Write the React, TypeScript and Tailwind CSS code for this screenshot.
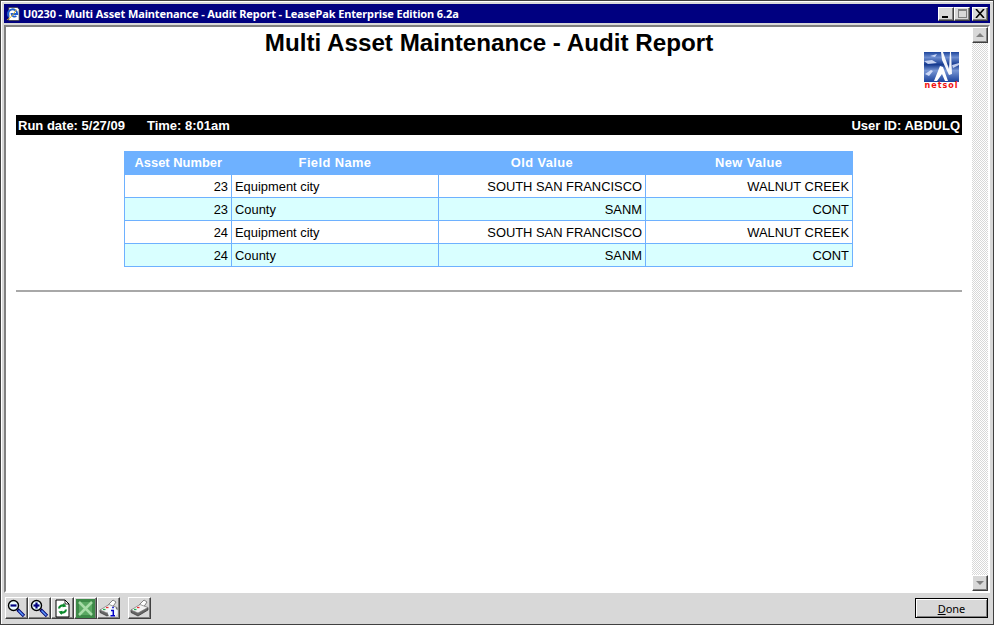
import { ReactNode } from "react";

const rows = [
  { asset: "23", field: "Equipment city", oldValue: "SOUTH SAN FRANCISCO", newValue: "WALNUT CREEK" },
  { asset: "23", field: "County", oldValue: "SANM", newValue: "CONT" },
  { asset: "24", field: "Equipment city", oldValue: "SOUTH SAN FRANCISCO", newValue: "WALNUT CREEK" },
  { asset: "24", field: "County", oldValue: "SANM", newValue: "CONT" },
];

const raised = "border border-t-white border-l-white border-r-[#404040] border-b-[#404040] bg-[#d8d8d8] shadow-[inset_-1px_-1px_0_#808080]";

const CaptionButton = ({ children, className }: { children: ReactNode; className?: string }) => (
  <div className={`${raised} w-4 h-[14px] flex items-center justify-center ${className ?? ""}`}>{children}</div>
);

const ToolButton = ({ children, className }: { children: ReactNode; className?: string }) => (
  <div className={`${raised} w-[23px] h-[22px] flex items-center justify-center ${className ?? ""}`}>
    <svg width="19" height="19" viewBox="0 0 19 19">{children}</svg>
  </div>
);

const Magnifier = ({ plus }: { plus?: boolean }) => (
  <>
    <path d="M10.5 10.5l6.5 6.5" stroke="#000070" strokeWidth="3.2" />
    <path d="M11.5 11.5l5 5" stroke="#5c9aff" strokeWidth="1.5" />
    <circle cx="6.5" cy="6.5" r="5" fill="#eafcff" stroke="#000" strokeWidth="1.4" />
    <path d="M3.5 6.5h6" stroke="#000080" strokeWidth="2.2" />
    {plus && <path d="M6.5 3.5v6" stroke="#000080" strokeWidth="2.2" />}
  </>
);

const Printer = ({ info }: { info?: boolean }) => (
  <>
    <path d="M9 6l5-5 3 2-4 6z" fill="#fff" stroke="#666" strokeWidth="0.8" />
    <path d="M1 11v2.500l7 3.500 10-6v-2.500z" fill="#666" stroke="#333" strokeWidth="0.7" />
    <path d="M1 11l9-5.500 8 3-10 5.500z" fill="#f2f2f2" stroke="#777" strokeWidth="0.7" />
    <path d="M4 10.500h2.500" stroke="#22b050" strokeWidth="1.300" />
    <path d="M7 8.500h2.500" stroke="#e03030" strokeWidth="1.300" />
    {info && (
      <>
        <circle cx="13.500" cy="13" r="5" fill="#f2f8ff" />
        <path d="M12 11.500h2.300v5M11.500 16.800h4.500M13.200 8.500h1.600" stroke="#0000c8" strokeWidth="1.500" fill="none" />
      </>
    )}
  </>
);

const NetsolLogo = () => (
  <div className="w-[35px] flex flex-col items-center">
    <svg width="35" height="30" viewBox="0 0 35 30" className="block">
      <defs>
        <linearGradient id="netsolBlue" x1="0" y1="0" x2="0" y2="1">
          <stop offset="0" stopColor="#1d459c" />
          <stop offset="0.18" stopColor="#6d8dd0" />
          <stop offset="0.42" stopColor="#163a90" />
          <stop offset="0.62" stopColor="#7896d4" />
          <stop offset="1" stopColor="#1a429c" />
        </linearGradient>
      </defs>
      <rect width="35" height="30" fill="url(#netsolBlue)" />
      <path d="M17 0h2l6 17 1-17h1l1 22-3 1-7-15z" fill="#fff" opacity="0.95" />
      <path d="M16 14l3 1 5 14h-3l-3-7-5 7h-3z" fill="#fff" />
      <path d="M0 9l8-1 5 3-9 1z M1 22l6-4 2 1-4 5z M28 13l7-2v2l-6 3z M6 4l7-2-2 3z" fill="#dfe8ff" opacity="0.85" />
    </svg>
    <span className="mt-[1px] text-[8px] leading-[6px] font-bold tracking-[1px] text-[#f01010] font-['DejaVu_Sans',sans-serif]">netsol</span>
  </div>
);

export default function App() {
  return (
    <div className="w-[994px] h-[625px] bg-[#d8d8d8] border border-[#404040] shadow-[inset_1px_1px_0_#fff] p-[3px] flex flex-col overflow-hidden font-['Liberation_Sans',sans-serif]">
      {/* title bar */}
      <div className="h-[19px] shrink-0 bg-[#000080] flex items-center pl-[2px] pr-[2px] gap-[2px]">
        <svg width="15" height="16" viewBox="0 0 16 16">
          <path d="M3 1h9l2 2v12H3z" fill="#fff" stroke="#333" strokeWidth="0.8" />
          <path d="M3 11a5 5 0 1 1 9-3H6a3 3 0 0 0 5 2" fill="none" stroke="#1f5fd0" strokeWidth="2" />
          <path d="M1 14c2 0 7-5 10-11" fill="none" stroke="#e8b820" strokeWidth="1" />
        </svg>
        <span className="text-[11px] leading-none font-bold tracking-[-0.12px] text-white font-['Noto_Sans',sans-serif]">U0230 - Multi Asset Maintenance - Audit Report - LeasePak Enterprise Edition 6.2a</span>
        <div className="ml-auto flex items-center">
          <CaptionButton><div className="w-[6px] h-[2px] bg-black mt-[6px] mr-[2px]" /></CaptionButton>
          <CaptionButton className="mr-[2px]"><div className="w-[9px] h-[9px] border border-[#808080] border-t-2" /></CaptionButton>
          <CaptionButton>
            <svg width="10" height="9" viewBox="0 0 10 9"><path d="M1 0l8 9M9 0L1 9" stroke="#000" strokeWidth="1.6" /></svg>
          </CaptionButton>
        </div>
      </div>

      {/* page area */}
      <div className="mt-[2px] flex-1 min-h-0 flex border-2 border-t-[#808080] border-l-[#808080] border-r-white border-b-white">
        <div className="flex-1 min-w-0 bg-white pt-[2px] px-[10px]">
          <div className="relative">
            <h1 className="text-center text-[24.2px] leading-[28px] font-bold text-black">Multi Asset Maintenance - Audit Report</h1>
            <div className="absolute right-[3px] top-[23px]"><NetsolLogo /></div>
          </div>
          <div className="mt-[58px] h-[20px] bg-black flex items-center justify-between px-[2px] pt-[1px] text-[13px] font-bold text-white">
            <div className="flex gap-[22px]">
              <span>Run date: 5/27/09</span>
              <span>Time: 8:01am</span>
            </div>
            <span>User ID: ABDULQ</span>
          </div>
          <table className="mt-[16px] ml-[108px] w-[728px] table-fixed border-collapse border border-[#6eb1ff] text-[12.9px] text-black">
            <colgroup>
              <col className="w-[107px]" />
              <col className="w-[207px]" />
              <col className="w-[207px]" />
              <col className="w-[207px]" />
            </colgroup>
            <thead>
              <tr className="h-[23px] bg-[#6eb1ff] text-white font-bold">
                <th>Asset Number</th>
                <th className="tracking-[0.4px]">Field Name</th>
                <th className="tracking-[0.4px]">Old Value</th>
                <th className="tracking-[0.4px]">New Value</th>
              </tr>
            </thead>
            <tbody>
              {rows.map((row, i) => (
                <tr key={i} className={`h-[23px] ${i % 2 === 1 ? "bg-[#d9ffff]" : "bg-white"}`}>
                  <td className="border border-[#6eb1ff] text-right px-[3px] pt-[1px]">{row.asset}</td>
                  <td className="border border-[#6eb1ff] text-left px-[3px] pt-[1px]">{row.field}</td>
                  <td className="border border-[#6eb1ff] text-right px-[3px] pt-[1px]">{row.oldValue}</td>
                  <td className="border border-[#6eb1ff] text-right px-[3px] pt-[1px]">{row.newValue}</td>
                </tr>
              ))}
            </tbody>
          </table>
          <hr className="mt-[23px] border-0 border-t-2 border-t-[#a8a8a8]" />
        </div>

        {/* scrollbar */}
        <div className="w-4 shrink-0 flex flex-col justify-between bg-[repeating-conic-gradient(#d8d8d8_0_25%,#ffffff_0_50%)] bg-[length:2px_2px]">
          <div className={`${raised} h-4 flex items-center justify-center`}>
            <div className="w-0 h-0 border-x-[4px] border-x-transparent border-b-[4px] border-b-[#808080]" />
          </div>
          <div className={`${raised} h-4 flex items-center justify-center`}>
            <div className="w-0 h-0 border-x-[4px] border-x-transparent border-t-[4px] border-t-[#808080]" />
          </div>
        </div>
      </div>

      {/* bottom toolbar */}
      <div className="h-[28px] shrink-0 flex items-center pl-[1px] pr-[2px] pt-[2px]">
        <ToolButton><Magnifier /></ToolButton>
        <ToolButton><Magnifier plus /></ToolButton>
        <ToolButton>
          <path d="M3 1h9l4 4v13H3z" fill="#fff" stroke="#000" />
          <path d="M12 1v4h4" fill="none" stroke="#000" strokeWidth="0.8" />
          <path d="M6 9.500a3.500 3.500 0 0 1 5.500-2.500M13 10.500a3.500 3.500 0 0 1-5.500 2.500" fill="none" stroke="#0c8a2c" strokeWidth="2.200" />
          <path d="M10.500 4l3 3.500-4 .8zM8.500 16l-3-3.500 4-.8z" fill="#0c8a2c" />
        </ToolButton>
        <ToolButton>
          <rect x="0" y="0" width="19" height="19" fill="#3d8a48" />
          <rect x="3" y="3" width="13" height="13" fill="#5aa862" />
          <path d="M3 3l13 13M16 3L3 16" stroke="#a8dca8" strokeWidth="2.500" />
        </ToolButton>
        <ToolButton><Printer info /></ToolButton>
        <ToolButton className="ml-[8px]"><Printer /></ToolButton>
        <button className="ml-auto w-[73px] h-[20px] border border-black bg-[#d8d8d8] shadow-[inset_1px_1px_0_#fff,inset_-1px_-1px_0_#808080] text-[11px] leading-none text-black font-['Noto_Sans',sans-serif]">
          <span className="underline">D</span>one
        </button>
      </div>
    </div>
  );
}
